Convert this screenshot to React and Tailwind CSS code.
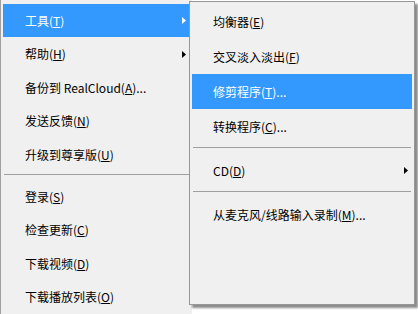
const mainItems = [
  { label: '工具', key: 'T', active: true, sub: true },
  { label: '帮助', key: 'H', sub: true },
  { label: '备份到 RealCloud', key: 'A', dots: true },
  { label: '发送反馈', key: 'N' },
  { label: '升级到尊享版', key: 'U' },
  { sep: true },
  { label: '登录', key: 'S' },
  { label: '检查更新', key: 'C' },
  { label: '下载视频', key: 'D' },
  { label: '下载播放列表', key: 'O' },
];

const subItems = [
  { label: '均衡器', key: 'E' },
  { label: '交叉淡入淡出', key: 'F' },
  { label: '修剪程序', key: 'T', dots: true, active: true },
  { label: '转换程序', key: 'C', dots: true },
  { sep: true },
  { label: 'CD', key: 'D', sub: true },
  { sep: true },
  { label: '从麦克风/线路输入录制', key: 'M', dots: true },
];

function Arrow({ active }) {
  return (
    <svg width="4" height="7" viewBox="0 0 4 7" className="ml-auto">
      <path d="M0 0 L4 3.5 L0 7 Z" fill={active ? '#ffffff' : '#000000'} />
    </svg>
  );
}

function Item({ item, pad }) {
  if (item.sep) {
    return (
      <div className="h-[9px] pt-[3px] px-[1px]">
        <div className="h-px bg-[#a0a0a0]" />
      </div>
    );
  }
  return (
    <div
      className={`flex items-center h-[35px] pr-[4px] ${pad} ${
        item.active ? 'bg-[#3399ff] text-white' : 'text-black'
      }`}
    >
      <span className="whitespace-nowrap">
        {item.label}(<span className="underline underline-offset-1 decoration-1">{item.key}</span>){item.dots ? '...' : ''}
      </span>
      {item.sub && <Arrow active={item.active} />}
    </div>
  );
}

export default function App() {
  return (
    <div
      className="relative w-[418px] h-[314px] overflow-hidden bg-white text-[12px] leading-none"
      style={{ fontFamily: '"Noto Sans CJK SC", "Noto Sans", sans-serif' }}
    >
      <div className="w-[192px] h-full bg-[#f0f0f0] border-l border-[#a0a0a0] pl-[2px] pr-[2px] pt-[4px] flex flex-col">
        {mainItems.map((it, i) => (
          <Item key={i} item={it} pad="pl-[22px]" />
        ))}
      </div>

      <div className="absolute left-[189px] top-[1px] w-[226px] h-[304px] bg-[#f0f0f0] border border-[#979797] p-[2px] flex flex-col shadow-[3px_3px_2px_rgba(0,0,0,0.45)]">
        {subItems.map((it, i) => (
          <Item key={i} item={it} pad="pl-[21px]" />
        ))}
      </div>
    </div>
  );
}
